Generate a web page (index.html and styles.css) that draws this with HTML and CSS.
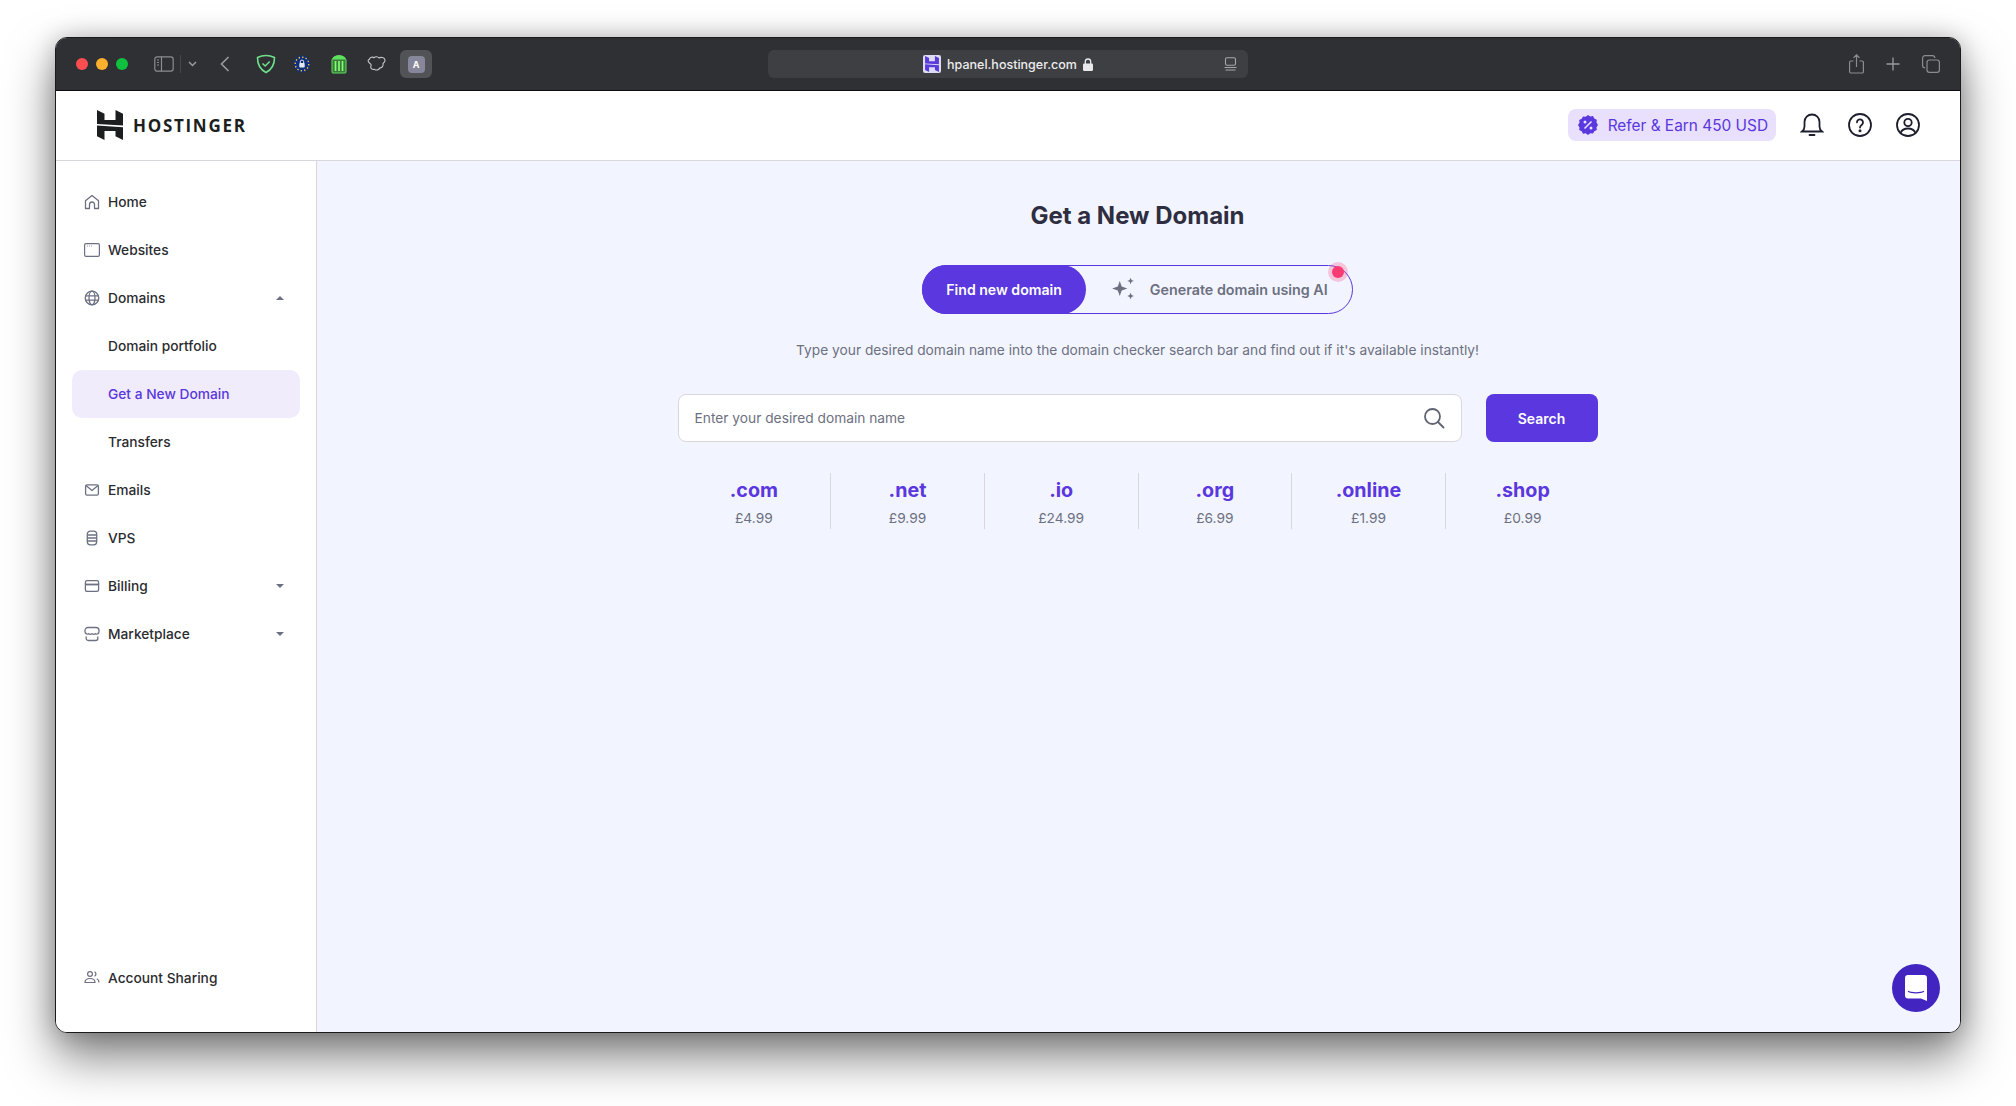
FILE: index.html
```html
<!DOCTYPE html>
<html lang="en">
<head>
    <meta charset="UTF-8">
    <meta name="viewport" content="width=device-width, initial-scale=1.0">
    <title>Get a New Domain - Hostinger</title>
    <link rel="stylesheet" href="styles.css">
</head>
<body>
    <div class="window">
        <!-- Browser toolbar -->
        <div class="toolbar">
            <div class="toolbar-left">
                <div class="lights">
                    <span class="light red"></span>
                    <span class="light yellow"></span>
                    <span class="light green"></span>
                </div>
                <svg class="tb-sidebar" width="20" height="16" viewBox="0 0 20 16" fill="none" stroke="#8b8c90" stroke-width="1.2"><rect x=".8" y=".8" width="18.4" height="14.4" rx="2.4"/><path d="M7.5 .8v14.4M3 4h2M3 6.500h2M3 9h2"/></svg>
                <span class="tb-sep"></span>
                <svg class="tb-chevron" width="9" height="6" viewBox="0 0 9 6" fill="none" stroke="#9a9b9f" stroke-width="1.5"><path d="M1 1l3.500 3.500L8 1"/></svg>
                <svg class="tb-back" width="10" height="16" viewBox="0 0 10 16" fill="none" stroke="#9a9b9f" stroke-width="1.6"><path d="M8.500 1L1.500 8l7 7"/></svg>
                <svg class="tb-ext shield" width="20" height="20" viewBox="0 0 20 20" fill="none" stroke="#6fe08a" stroke-width="1.6"><path d="M10 1.500c3 0 6 .8 8.500 2 0 6.500-2.500 12-8.500 15C4 15.500 1.500 10 1.500 3.500c2.500-1.200 5.500-2 8.500-2z"/><path d="M6.500 9.500l2.700 2.500 4.500-4.500"/></svg>
                <svg class="tb-ext" width="18" height="18" viewBox="0 0 18 18"><circle cx="9" cy="9" r="8.500" fill="#12307a"/><circle cx="9" cy="9" r="6.800" fill="none" stroke="#f2c230" stroke-width="1.400" stroke-dasharray="1.400 2.150"/><rect x="6.300" y="8" width="5.400" height="4.500" rx=".8" fill="#e6e8f0"/><path d="M7.300 8V6.800a1.700 1.700 0 013.400 0V8" fill="none" stroke="#e6e8f0"/></svg>
                <svg class="tb-ext" width="16" height="20" viewBox="0 0 16 20" fill="#3d7a3d"><path d="M1 5c1.500-3 4-4 7-4s5.500 1 7 4z" fill="#5fe05f"/><rect x="1" y="5" width="14" height="14" rx=".8" fill="#3d7a3d" stroke="#5fe05f" stroke-width="1"/><path d="M4.500 7v10M8 7v10M11.500 7v10" stroke="#7dff6e" stroke-width="1.700"/></svg>
                <svg class="tb-ext" width="20" height="16" viewBox="0 0 20 16" fill="none" stroke="#c5c6c9" stroke-width="1.100"><path d="M2.500 3.200C3 1.300 5.500.6 7 1.700c1.200-1.300 4-1.200 5 .2 1.800-1 5.500-.6 6 1.900.4 2-1.200 3-2 3.600.6 2.600-1 4.700-3 4.400-.8 2-3.800 3-5.500 1.500-1.800.6-3.800-.4-3.800-2.300 0-1 .8-1.600.3-2.500C3.500 7.600 1 6.500 1.100 4.800c0-.7.600-1.400 1.400-1.600z"/></svg>
                <div class="tb-active"><span class="tb-a">A</span></div>
            </div>
            <div class="address">
                <span class="favicon">
                    <svg width="14" height="16" viewBox="0 0 26 30" fill="#5a3ad8"><path d="M0 0l7.500 3.700V10h11V0L26 3.700v11.800L0 14zM0 15.500l26 1.800V30l-7.500-3.700V21h-11v9L0 26.300z"/></svg>
                </span>
                <span class="url">hpanel.hostinger.com</span>
                <svg class="lock" width="10" height="13" viewBox="0 0 10 13" fill="#e8e8ea"><path d="M1.300 5.500h7.400A1.300 1.300 0 0110 6.800v4.900A1.300 1.300 0 018.700 13H1.300A1.300 1.300 0 010 11.700V6.800a1.300 1.300 0 011.300-1.300z"/><path d="M2.300 6V3.700a2.700 2.700 0 015.400 0V6" fill="none" stroke="#e8e8ea" stroke-width="1.300"/></svg>
                <svg class="reader" width="13" height="14" viewBox="0 0 13 14" fill="none" stroke="#a6a7ab" stroke-width="1.100"><rect x="1.500" y=".7" width="10" height="7.600" rx="1.500"/><path d="M.5 10.500h12M1.500 13h10"/></svg>
            </div>
            <div class="toolbar-right">
                <svg width="15" height="20" viewBox="0 0 15 20" fill="none" stroke="#8b8c90" stroke-width="1.200"><path d="M4.500 7H1.800A1.200 1.200 0 00.6 8.200v9.600A1.200 1.200 0 001.800 19h11.400a1.200 1.200 0 001.200-1.200V8.200A1.200 1.200 0 0013.200 7h-2.700M7.500 13V1M4.500 3.800l3-3 3 3"/></svg>
                <svg width="14" height="14" viewBox="0 0 14 14" fill="none" stroke="#9a9b9f" stroke-width="1.300"><path d="M7 .5v13M.5 7h13"/></svg>
                <svg width="18" height="18" viewBox="0 0 18 18" fill="none" stroke="#8b8c90" stroke-width="1.200"><rect x="5" y="5" width="12.400" height="12.400" rx="2.400"/><path d="M3 12.800A2.400 2.400 0 01.6 10.400V3A2.400 2.400 0 013 .6h7.400A2.400 2.400 0 0112.800 3"/></svg>
            </div>
        </div>

        <!-- Site header -->
        <header class="site-header">
            <div class="logo">
                <svg width="26" height="30" viewBox="0 0 26 30" fill="#1d1e20"><path d="M0 0l7.500 3.700V10h11V0L26 3.700v11.800L0 14zM0 15.500l26 1.800V30l-7.500-3.700V21h-11v9L0 26.300z"/></svg>
                <span class="logo-text">HOSTINGER</span>
            </div>
            <div class="header-actions">
                <a class="refer" href="#">
                    <svg width="20" height="20" viewBox="0 0 20 20"><path fill="#5a37de" d="M10 0l2.300 1.500 2.700-.4 1.300 2.400 2.500 1.200-.3 2.700L20 10l-1.500 2.300.3 2.700-2.500 1.200-1.300 2.400-2.700-.4L10 20l-2.300-1.700-2.700.4-1.300-2.400-2.500-1.200.3-2.700L0 10l1.500-2.300-.3-2.700 2.500-1.200L5 1.400l2.700.4z"/><path d="M6.500 13.500l7-7" stroke="#e8e0fd" stroke-width="1.600"/><circle cx="7" cy="7" r="1.500" fill="#e8e0fd"/><circle cx="13" cy="13" r="1.500" fill="#e8e0fd"/></svg>
                    Refer &amp; Earn 450 USD
                </a>
                <svg width="24" height="24" viewBox="0 0 24 24" fill="none" stroke="#1d1e2e" stroke-width="1.800" stroke-linecap="round"><path d="M2 18.500c1.500-1.200 2.500-2 2.500-5V9a7.500 7.500 0 0115 0v4.500c0 3 1 3.800 2.500 5z"/><path d="M9.500 22h5"/></svg>
                <svg width="24" height="24" viewBox="0 0 24 24" fill="none" stroke="#1d1e2e" stroke-width="1.800" stroke-linecap="round"><circle cx="12" cy="12" r="11"/><path d="M9 9.300a3 3 0 115 2.300c-1.100.8-2 1.400-2 2.900"/><circle cx="12" cy="17.700" r=".6" fill="#1d1e2e"/></svg>
                <svg width="24" height="24" viewBox="0 0 24 24" fill="none" stroke="#1d1e2e" stroke-width="1.800" stroke-linecap="round"><circle cx="12" cy="12" r="11"/><circle cx="12" cy="9.500" r="3.700"/><path d="M4.500 20c1.300-3 4-4.500 7.500-4.500s6.200 1.500 7.500 4.500"/></svg>
            </div>
        </header>

        <div class="layout">
            <aside class="sidebar">
                <nav class="nav-list">
                    <a class="nav-item" href="#">
                        <svg class="nav-icon" viewBox="0 0 16 16" fill="none" stroke="#6d7081" stroke-width="1.300" stroke-linejoin="round"><path d="M1.500 14.500V6.800L8 1.500l6.500 5.300v7.700h-4v-4a2.500 2.500 0 00-5 0v4z"/></svg>
                        Home
                    </a>
                    <a class="nav-item" href="#">
                        <svg class="nav-icon" viewBox="0 0 16 16" fill="none" stroke="#6d7081" stroke-width="1.200"><rect x=".6" y="1.600" width="14.800" height="12.800" rx="1.400"/><path d="M3 4h.8M5 4h.8M7 4h.8" stroke-width=".9"/></svg>
                        Websites
                    </a>
                    <a class="nav-item" href="#">
                        <svg class="nav-icon" viewBox="0 0 16 16" fill="none" stroke="#6d7081" stroke-width="1.300"><circle cx="8" cy="8" r="6.800"/><ellipse cx="8" cy="8" rx="3" ry="6.800"/><path d="M1.500 5.800h13M1.500 10.200h13"/></svg>
                        Domains
                        <span class="caret up"></span>
                    </a>
                    <a class="nav-item" href="#">Domain portfolio</a>
                    <a class="nav-item active" href="#">Get a New Domain</a>
                    <a class="nav-item" href="#">Transfers</a>
                    <a class="nav-item" href="#">
                        <svg class="nav-icon" viewBox="0 0 16 16" fill="none" stroke="#6d7081" stroke-width="1.300" stroke-linejoin="round"><rect x="1.600" y="2.800" width="12.800" height="10.400" rx="1.400"/><path d="M2 3.500l6 5 6-5"/></svg>
                        Emails
                    </a>
                    <a class="nav-item" href="#">
                        <svg class="nav-icon" viewBox="0 0 16 16" fill="none" stroke="#6d7081" stroke-width="1.300"><rect x="3.300" y="1.200" width="9.400" height="13.600" rx="3"/><path d="M3.300 5h9.400M3.300 8h9.400M3.300 11h9.400"/></svg>
                        VPS
                    </a>
                    <a class="nav-item" href="#">
                        <svg class="nav-icon" viewBox="0 0 16 16" fill="none" stroke="#6d7081" stroke-width="1.300"><rect x="1.400" y="2.600" width="13.200" height="10.800" rx="1.600"/><path d="M1.400 6.500h13.200" stroke-width="1.800"/></svg>
                        Billing
                        <span class="caret"></span>
                    </a>
                    <a class="nav-item" href="#">
                        <svg class="nav-icon" viewBox="0 0 16 16" fill="none" stroke="#6d7081" stroke-width="1.300"><path d="M2.500 7.500a1.800 1.800 0 01-1.500-1.800V4.500a3 3 0 013-3h8a3 3 0 013 3v1.200a1.800 1.800 0 01-1.500 1.800M1.500 7.500c1.500 1 2.200 1 3.200.2 1 .8 2.200.8 3.300 0 1.100.8 2.300.8 3.300 0 1 .8 1.700.8 3.200-.2M2.200 10.500v2a2 2 0 002 2h7.600a2 2 0 002-2v-2"/></svg>
                        Marketplace
                        <span class="caret"></span>
                    </a>
                </nav>
                <a class="nav-item nav-bottom" href="#">
                    <svg class="nav-icon" viewBox="0 0 16 16" fill="none" stroke="#6d7081" stroke-width="1.200"><circle cx="6" cy="4" r="2.400"/><path d="M1 12.500c0-2.500 2-4 5-4s5 1.500 5 4zM10.500 1.800a2.400 2.400 0 010 4.400M12.800 8.800c1.300.6 2.200 1.900 2.200 3.700"/></svg>
                    Account Sharing
                </a>
            </aside>

            <main class="content">
                <h1 class="page-title">Get a New Domain</h1>
                <div class="mode-toggle">
                    <button class="mode-btn selected">Find new domain</button>
                    <button class="mode-btn">
                        <svg width="26" height="26" viewBox="0 0 24 24" fill="#6d7081"><path d="M9 4.500l1.800 5.200L16 11.500l-5.200 1.800L9 18.500l-1.800-5.200L2 11.500l5.200-1.800zM19 1.500l.9 2.100 2.100.9-2.100.9-.9 2.100-.9-2.100-2.100-.9 2.100-.9zM19 15.500l.9 2.100 2.100.9-2.100.9-.9 2.100-.9-2.100-2.100-.9 2.100-.9z"/></svg>
                        Generate domain using AI
                    </button>
                    <span class="pulse"></span>
                </div>
                <p class="hint">Type your desired domain name into the domain checker search bar and find out if it's available instantly!</p>
                <form class="search-row">
                    <div class="search-box">
                        <input class="search-input" type="text" placeholder="Enter your desired domain name">
                        <svg width="22" height="22" viewBox="0 0 22 22" fill="none" stroke="#5f6270" stroke-width="1.800" stroke-linecap="round"><circle cx="9.500" cy="9.500" r="7.500"/><path d="M15 15l5.500 5.500"/></svg>
                    </div>
                    <button class="search-btn" type="button">Search</button>
                </form>
                <div class="tlds">
                    <div class="tld"><div class="tld-name">.com</div><div class="tld-price">£4.99</div></div>
                    <div class="tld"><div class="tld-name">.net</div><div class="tld-price">£9.99</div></div>
                    <div class="tld"><div class="tld-name">.io</div><div class="tld-price">£24.99</div></div>
                    <div class="tld"><div class="tld-name">.org</div><div class="tld-price">£6.99</div></div>
                    <div class="tld"><div class="tld-name">.online</div><div class="tld-price">£1.99</div></div>
                    <div class="tld"><div class="tld-name">.shop</div><div class="tld-price">£0.99</div></div>
                </div>
                <button class="chat-btn" aria-label="Chat">
                    <svg width="22" height="26" viewBox="0 0 22 26"><path fill="#fff" d="M3 0h16a3 3 0 013 3v23l-6-2.500H3a3 3 0 01-3-3V3a3 3 0 013-3z"/><path d="M3.500 16.500c2.500 1.700 12.500 1.700 15 0" fill="none" stroke="#4225c0" stroke-width="1.300" stroke-linecap="round"/></svg>
                </button>
            </main>
        </div>
    </div>
</body>
</html>
```

FILE: styles.css
```css
* {
    box-sizing: border-box;
}

html,
body {
    height: 100%;
}

body {
    font-family: 'Inter', 'Liberation Sans', sans-serif;
    margin: 0;
    padding: 37px 55px 73px;
    background: #fff;
    color: #1d1e20;
}

a {
    color: inherit;
    text-decoration: none;
}

.window {
    height: 100%;
    display: flex;
    flex-direction: column;
    border: 1px solid #1a1a1c;
    border-radius: 12px;
    overflow: hidden;
    background: #fff;
    box-shadow: 0 24px 48px rgba(0, 0, 0, 0.5), 0 0 24px rgba(0, 0, 0, 0.22);
}

/* Browser toolbar */
.toolbar {
    height: 53px;
    flex: none;
    display: grid;
    grid-template-columns: 1fr 480px 1fr;
    align-items: center;
    background: #2f3034;
    border-bottom: 1px solid #0c0c0d;
}

.toolbar-left {
    display: flex;
    align-items: center;
    padding-left: 20px;
}

.lights {
    display: flex;
    gap: 8px;
    margin-right: 26px;
}

.light {
    width: 12px;
    height: 12px;
    border-radius: 50%;
}

.red { background: #fe4e50; }
.yellow { background: #fcb02e; }
.green { background: #0fc13f; }

.tb-sep {
    width: 1px;
    height: 18px;
    margin: 0 7px 0 6px;
    background: #46474b;
}

.tb-chevron {
    margin-right: 23px;
}

.tb-back {
    margin-right: 26px;
}

.tb-ext {
    margin-right: 20px;
}

.tb-ext.shield {
    margin-right: 17px;
}

.tb-active {
    width: 32px;
    height: 28px;
    margin-left: -7px;
    display: flex;
    align-items: center;
    justify-content: center;
    background: #525357;
    border-radius: 6px;
}

.tb-a {
    width: 17px;
    height: 17px;
    display: flex;
    align-items: center;
    justify-content: center;
    border-radius: 4px;
    background: #86879a;
    color: #fff;
    font-size: 9px;
    font-weight: 700;
}

.address {
    height: 28px;
    position: relative;
    display: flex;
    align-items: center;
    justify-content: center;
    background: #3e3f43;
    border-radius: 6px;
    color: #ececee;
    font-size: 12.5px;
    font-weight: 500;
}

.favicon {
    width: 18px;
    height: 18px;
    display: flex;
    align-items: center;
    justify-content: center;
    margin-right: 6px;
    background: #dcdcf4;
    border-radius: 2px;
}

.lock {
    margin-left: 6px;
}

.reader {
    position: absolute;
    right: 11px;
    top: 7px;
}

.toolbar-right {
    display: flex;
    align-items: center;
    justify-content: flex-end;
    gap: 22px;
    padding-right: 20px;
}

/* Site header */
.site-header {
    height: 70px;
    flex: none;
    display: flex;
    align-items: center;
    justify-content: space-between;
    padding: 0 40px 1px 41px;
    background: #fff;
    border-bottom: 1px solid #d8d8dc;
}

.logo {
    display: flex;
    align-items: center;
    gap: 10px;
}

.logo-text {
    font-family: 'Open Sans', sans-serif;
    font-size: 17px;
    font-weight: 700;
    letter-spacing: 1.7px;
}

.header-actions {
    display: flex;
    align-items: center;
    gap: 24px;
}

.refer {
    height: 32px;
    display: flex;
    align-items: center;
    gap: 10px;
    padding: 0 8px 0 10px;
    background: #e8e0fd;
    border-radius: 8px;
    color: #5a37de;
    font-size: 15.4px;
}

/* Sidebar */
.layout {
    flex: 1;
    display: flex;
    min-height: 0;
}

.sidebar {
    width: 261px;
    flex: none;
    display: flex;
    flex-direction: column;
    padding: 17px 16px 30px;
    background: #fff;
    border-right: 1px solid #d8d8dc;
}

.nav-item {
    height: 48px;
    display: flex;
    align-items: center;
    padding: 0 16px 0 36px;
    position: relative;
    border-radius: 10px;
    font-size: 13.75px;
    font-weight: 500;
    color: #2b2c30;
}

.nav-icon {
    position: absolute;
    left: 12px;
    top: 16px;
    width: 16px;
    height: 16px;
}

.nav-item.active {
    background: #f0ecfb;
    color: #5a37de;
}

.nav-bottom {
    margin-top: auto;
}

.caret {
    margin-left: auto;
    width: 0;
    height: 0;
    border-left: 4px solid transparent;
    border-right: 4px solid transparent;
    border-top: 4px solid #6d7081;
}

.caret.up {
    border-top: 0;
    border-bottom: 4px solid #6d7081;
}

/* Main content */
.content {
    flex: 1;
    position: relative;
    display: flex;
    flex-direction: column;
    align-items: center;
    padding-right: 2px;
    background: #f2f5ff;
}

.page-title {
    margin: 39px 0 0;
    font-size: 24px;
    line-height: 32px;
    font-weight: 700;
    color: #2f2e41;
}

.mode-toggle {
    position: relative;
    height: 49px;
    margin-top: 33px;
    display: flex;
    align-items: center;
    border: 1px solid #5a37de;
    border-radius: 25px;
}

.mode-btn {
    height: 49px;
    display: flex;
    align-items: center;
    gap: 14px;
    padding: 0 24px 1px;
    border: 0;
    border-radius: 25px;
    background: none;
    color: #6d7081;
    font-family: inherit;
    font-size: 14.3px;
    font-weight: 600;
}

.mode-btn.selected {
    margin-left: -1px;
    background: #5a37de;
    color: #fff;
    font-size: 14.1px;
}

.pulse {
    position: absolute;
    top: 0;
    right: 8px;
    width: 12px;
    height: 12px;
    border-radius: 50%;
    background: #fb3c74;
    box-shadow: 0 0 0 4px rgba(251, 60, 116, 0.25);
}

.hint {
    margin: 26px 0 0;
    font-size: 13.75px;
    line-height: 20px;
    color: #6d7081;
}

.search-row {
    width: 920px;
    margin-top: 34px;
    display: flex;
    gap: 24px;
}

.search-box {
    flex: 1;
    height: 48px;
    display: flex;
    align-items: center;
    padding: 0 16px;
    background: #fff;
    border: 1px solid #d8d8dc;
    border-radius: 8px;
}

.search-input {
    flex: 1;
    border: 0;
    outline: 0;
    padding: 0;
    background: none;
    color: #6d7081;
    font-family: inherit;
    font-size: 13.75px;
}

.search-input::placeholder {
    color: #6d7081;
    opacity: 1;
}

.search-btn {
    width: 112px;
    height: 48px;
    border: 0;
    border-radius: 8px;
    background: #5a37de;
    color: #fff;
    font-family: inherit;
    font-size: 14px;
    font-weight: 600;
}

.tlds {
    width: 922px;
    margin: 31px 0 0 2px;
    display: grid;
    grid-template-columns: repeat(6, 1fr);
}

.tld {
    height: 56px;
    display: flex;
    flex-direction: column;
    align-items: center;
    border-right: 1px solid #d8d8dc;
}

.tld:last-child {
    border-right: 0;
}

.tld-name {
    font-size: 19.7px;
    line-height: 35px;
    font-weight: 700;
    color: #5a37de;
}

.tld-price {
    font-size: 13.75px;
    line-height: 20px;
    color: #6d7081;
}

.chat-btn {
    position: absolute;
    right: 20px;
    bottom: 20px;
    width: 48px;
    height: 48px;
    display: flex;
    align-items: center;
    justify-content: center;
    padding: 0;
    border: 0;
    border-radius: 50%;
    background: #4225c0;
}
```
